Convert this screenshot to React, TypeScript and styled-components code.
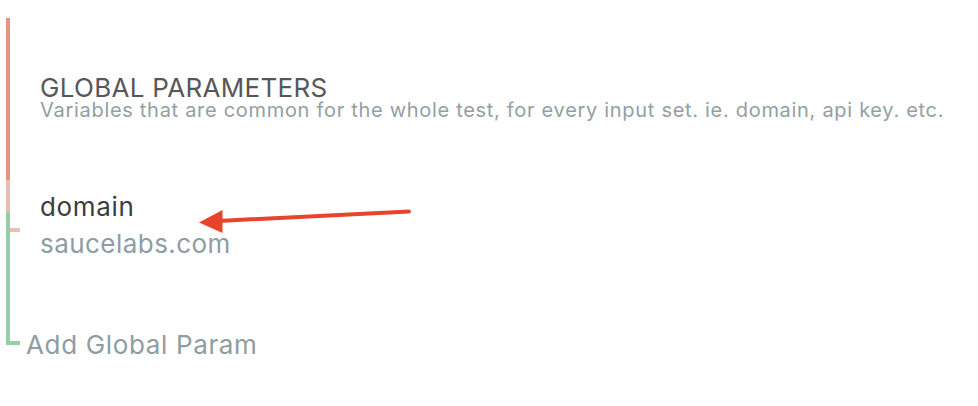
import React from "react";
import styled, { createGlobalStyle } from "styled-components";

const Global = createGlobalStyle`
  html, body { margin: 0; padding: 0; background: #ffffff; }
  body { font-family: "Inter", "Open Sans", sans-serif; }
`;

const Page = styled.div`
  position: relative;
  width: 978px;
  height: 406px;
  padding: 18px 0 0 6px;
  box-sizing: border-box;
  overflow: hidden;
`;

const Header = styled.header`
  height: 162px;
  box-sizing: border-box;
  border-left: 4px solid #e59482;
  padding: 57px 0 0 30px;
`;

const Title = styled.h1`
  margin: 0;
  font-size: 26px;
  line-height: 26px;
  font-weight: 400;
  letter-spacing: 0.3px;
  color: #555859;
`;

const Subtitle = styled.p`
  margin: 0;
  font-size: 20px;
  line-height: 18px;
  letter-spacing: 0.7px;
  color: #939fa3;
`;

const Params = styled.section`
  display: flex;
  flex-direction: row;
`;

const Rail = styled.div`
  width: 14px;
  display: flex;
  flex-direction: column;
  margin-bottom: 15px;
`;

const RailSegment = styled.div<{ $color: string; $height: number }>`
  height: ${(p) => p.$height}px;
  border-left: 4px solid ${(p) => p.$color};
`;

const RailEnd = styled.div`
  position: relative;
  flex: 1;
  border-left: 4px solid #98cca6;
  border-bottom: 4px solid #98cca6;
  &::before {
    content: "";
    position: absolute;
    left: 0;
    top: 16px;
    width: 10px;
    height: 4px;
    background: #e8bdb2;
  }
`;

const Body = styled.div`
  display: flex;
  flex-direction: column;
`;

const Param = styled.div`
  padding: 8px 0 0 20px;
  height: 150px;
  box-sizing: border-box;
`;

const ParamText = styled.div<{ $muted?: boolean }>`
  font-size: 26px;
  line-height: 37px;
  letter-spacing: ${(p) => (p.$muted ? "0.45px" : "0.65px")};
  color: ${(p) => (p.$muted ? "#8e9da2" : "#3b3d3e")};
`;

const AddButton = styled.button`
  border: none;
  background: none;
  padding: 0;
  margin: 0 0 0 6px;
  font-family: inherit;
  font-size: 26px;
  line-height: 30px;
  letter-spacing: 0.65px;
  color: #8e9da2;
  text-align: left;
  cursor: pointer;
`;

const Annotation = styled.svg`
  position: absolute;
  left: 0;
  top: 0;
  pointer-events: none;
`;

export default function App() {
  return (
    <>
      <Global />
      <Page>
        <Header>
          <Title>GLOBAL PARAMETERS</Title>
          <Subtitle>
            Variables that are common for the whole test, for every input set. ie. domain, api key. etc.
          </Subtitle>
        </Header>
        <Params>
          <Rail>
            <RailSegment $color="#e8bdb2" $height={32} />
            <RailEnd />
          </Rail>
          <Body>
            <Param>
              <ParamText>domain</ParamText>
              <ParamText $muted>saucelabs.com</ParamText>
            </Param>
            <AddButton>Add Global Param</AddButton>
          </Body>
        </Params>
        <Annotation width="978" height="406" viewBox="0 0 978 406">
          <line x1="409" y1="211.5" x2="218" y2="221" stroke="#e8432c" strokeWidth="4" strokeLinecap="round" />
          <polygon points="199,222.5 222.5,210 222.5,233" fill="#e8432c" />
        </Annotation>
      </Page>
    </>
  );
}
